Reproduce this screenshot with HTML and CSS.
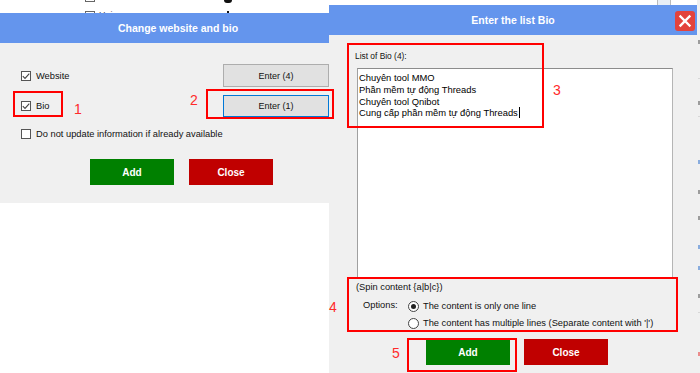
FILE: index.html
```html
<!DOCTYPE html>
<html>
<head>
<meta charset="utf-8">
<link rel="stylesheet" href="styles.css">
</head>
<body>
<div class="desk">
  <div class="backdrop">
    <span class="bd-box bd-box1"></span>
    <span class="bd-box bd-box2"></span>
    <span class="bd-text">Hei</span>
    <span class="bd-icon"></span>
    <span class="bd-dot"></span>
    <span class="bd-scroll"></span>
    <div class="bd-side">
      <span class="sb sb-d" style="top:40px"></span>
      <span class="sb sb-g" style="top:78px"></span>
      <span class="sb sb-d" style="top:101px"></span>
      <span class="sb sb-g" style="top:116px"></span>
      <span class="sb sb-b" style="top:160px"></span>
      <span class="sb sb-d" style="top:190px"></span>
      <span class="sb sb-d" style="top:216px"></span>
      <span class="sb sb-b" style="top:245px"></span>
      <span class="sb sb-b" style="top:266px"></span>
      <span class="sb sb-d" style="top:294px"></span>
      <span class="sb sb-g" style="top:312px"></span>
      <span class="sb sb-r" style="top:352px"></span>
    </div>
  </div>

  <section class="win win-left">
    <header class="titlebar">Change website and bio</header>
    <div class="left-body">
      <div class="row row-web">
        <label class="check"><span class="box"><svg viewBox="0 0 10 10" width="10" height="10"><path d="M1.8 5.2 L4 7.4 L8.3 2.6" fill="none" stroke="#444" stroke-width="1.1"/></svg></span>Website</label>
        <button class="btn-enter">Enter (4)</button>
      </div>
      <div class="row row-bio">
        <label class="check"><span class="box"><svg viewBox="0 0 10 10" width="10" height="10"><path d="M1.8 5.2 L4 7.4 L8.3 2.6" fill="none" stroke="#444" stroke-width="1.1"/></svg></span>Bio</label>
        <button class="btn-enter focused">Enter (1)</button>
      </div>
      <div class="row row-opt">
        <label class="check"><span class="box"></span>Do not update information if already available</label>
      </div>
      <div class="actions left-actions">
        <button class="btn add">Add</button>
        <button class="btn close">Close</button>
      </div>
    </div>
  </section>

  <section class="win win-right">
    <header class="titlebar titlebar-grid">
      <span></span>
      <span class="title-text">Enter the list Bio</span>
      <span class="xbtn"><svg viewBox="0 0 20 20" width="20" height="20"><path d="M5.5 5.5 L14.5 14.5 M14.5 5.5 L5.5 14.5" stroke="#fff" stroke-width="2.4" stroke-linecap="square"/></svg></span>
    </header>
    <div class="right-body">
      <div class="field-label">List of Bio (4):</div>
      <div class="textarea">
        <div>Chuyên tool MMO</div>
        <div>Phần mềm tự động Threads</div>
        <div>Chuyên tool Qnibot</div>
        <div>Cung cấp phần mềm tự động Threads<span class="caret"></span></div>
      </div>
      <div class="spin">(Spin content {a|b|c})</div>
      <div class="options">
        <span class="opt-label">Options:</span>
        <div class="radios">
          <label class="radio"><span class="circle on"></span>The content is only one line</label>
          <label class="radio"><span class="circle"></span>The content has multiple lines (Separate content with '|')</label>
        </div>
      </div>
      <div class="actions right-actions">
        <button class="btn add">Add</button>
        <button class="btn close">Close</button>
      </div>
    </div>
  </section>

  <div class="mark m1"></div>
  <div class="mark m2"></div>
  <div class="mark m3"></div>
  <div class="mark m4"></div>
  <div class="mark m5"></div>
  <span class="num n1">1</span>
  <span class="num n2">2</span>
  <span class="num n3">3</span>
  <span class="num n4">4</span>
  <span class="num n5">5</span>
</div>
</body>
</html>
```
FILE: styles.css
```css
* { box-sizing: border-box; }
html, body { margin: 0; padding: 0; }
body {
  width: 700px;
  height: 373px;
  overflow: hidden;
  background: #fff;
  font-family: "Liberation Sans", Arial, sans-serif;
  color: #111;
}
.desk {
  position: relative;
  width: 700px;
  height: 373px;
  overflow: hidden;
  background: #fff;
}

/* backdrop fragments */
.backdrop { position: absolute; inset: 0; }
.bd-box { position: absolute; width: 10px; height: 10px; border: 1px solid #666; background: #fff; }
.bd-box1 { left: 85px; top: -8px; }
.bd-box2 { left: 85px; top: 11px; }
.bd-text { position: absolute; left: 99px; top: 10px; font-size: 9px; color: #444; }
.bd-icon { position: absolute; left: 224px; top: -3px; width: 8px; height: 6px; background: #111; border-radius: 3px; }
.bd-dot { position: absolute; left: 227px; top: 11px; width: 2px; height: 2px; background: #111; }
.bd-scroll { position: absolute; left: 657px; top: 0; width: 14px; height: 6px; border-left: 1px solid #bbb; border-right: 1px solid #bbb; background: #e8eef6; }
.bd-side { position: absolute; left: 697px; top: 0; width: 3px; height: 373px; background: #f0f0f0; }
.sb { position: absolute; left: 1px; width: 2px; height: 4px; opacity: 0.7; }
.sb-d { background: #777; }
.sb-g { background: #ccc; height: 1px; }
.sb-b { background: #5b8fd6; }
.sb-r { background: #e86060; }

/* windows */
.win { position: absolute; background: #f0f0f0; }
.win-left { left: 0; top: 13px; width: 356px; height: 190px; }
.win-right { left: 329px; top: 5px; width: 368px; height: 372px; }

.titlebar {
  height: 30px;
  background: #6495ed;
  color: #fff;
  font-weight: bold;
  font-size: 10.5px;
  display: flex;
  align-items: center;
  justify-content: center;
}
.titlebar-grid {
  display: grid;
  grid-template-columns: 1fr auto 1fr;
  align-items: center;
}
.xbtn {
  justify-self: end;
  margin-right: 2px;
  margin-top: 1px;
  width: 20px;
  height: 20px;
  background: #e3433d;
  border-radius: 3px;
  display: flex;
}

/* left dialog body */
.left-body {
  padding: 21px 27px 0 21px;
  font-size: 9.3px;
  color: #111;
}
.row { display: flex; justify-content: space-between; align-items: center; }
.row-web { height: 23px; }
.row-bio { height: 22px; margin-top: 8px; }
.row-opt { height: 14px; margin-top: 10px; }
.check { display: flex; align-items: center; gap: 5px; }
.box {
  width: 10px;
  height: 10px;
  border: 1px solid #555;
  background: #fff;
  display: flex;
}
.box svg { display: block; margin: -1px; }
.btn-enter {
  width: 106px;
  height: 100%;
  background: #e1e1e1;
  border: 1px solid #adadad;
  font-family: "Liberation Sans", Arial, sans-serif;
  font-size: 9px;
  color: #111;
  padding: 0;
}
.btn-enter.focused { border: 1px solid #0078d7; background: #e1e1e1; }

.actions { display: flex; justify-content: center; }
.left-actions { margin-top: 18px; gap: 15px; padding-left: 13px; }
.btn {
  width: 84px;
  height: 26px;
  border: none;
  color: #fff;
  font-family: "Liberation Sans", Arial, sans-serif;
  font-weight: bold;
  font-size: 10px;
  padding: 0;
}
.btn.add { background: #008000; }
.btn.close { background: #c00000; }

/* right dialog body */
.right-body {
  padding: 16px 0 0 26px;
  font-size: 9.3px;
  color: #111;
}
.field-label { font-size: 8.4px; line-height: 11px; height: 11px; }
.textarea {
  margin-top: 6px;
  margin-left: 2px;
  width: 316px;
  height: 210px;
  background: #fff;
  border: 1px solid #b5b5b5;
  border-top-color: #8c8c8c;
  border-left-color: #a0a0a0;
  padding: 3px 1px;
  font-size: 9.4px;
  line-height: 11.8px;
  color: #000;
}
.caret { display: inline-block; width: 1px; height: 11px; background: #000; vertical-align: -2px; margin-left: 1px; }
.spin { margin-top: 2.5px; margin-left: 1px; line-height: 12px; height: 12px; }
.options { display: flex; margin-top: 5px; margin-left: 8px; }
.opt-label { width: 45px; line-height: 17px; margin-top: -1px; }
.radios { display: flex; flex-direction: column; }
.radio { display: flex; align-items: center; gap: 4px; height: 17px; }
.circle {
  width: 11px;
  height: 11px;
  border: 1px solid #444;
  border-radius: 50%;
  background: #fff;
  display: flex;
  align-items: center;
  justify-content: center;
}
.circle.on::after { content: ""; width: 5px; height: 5px; border-radius: 50%; background: #222; }
.right-actions { margin-top: 7.5px; gap: 14px; margin-left: -26px; padding-left: 8px; }

/* annotations */
.mark { position: absolute; border: 2px solid #ff0000; }
.m1 { left: 13px; top: 91px; width: 50px; height: 26px; }
.m2 { left: 206px; top: 89px; width: 128px; height: 30px; }
.m3 { left: 347px; top: 43px; width: 197px; height: 85px; }
.m4 { left: 347px; top: 277px; width: 331px; height: 55px; }
.m5 { left: 407px; top: 338px; width: 110px; height: 34px; }
.num {
  position: absolute;
  font-size: 14px;
  line-height: 14px;
  color: #ff2a2a;
  font-family: "Liberation Sans", Arial, sans-serif;
}
.n1 { left: 74px; top: 102px; }
.n2 { left: 190px; top: 93px; }
.n3 { left: 553px; top: 83px; }
.n4 { left: 329px; top: 300px; }
.n5 { left: 392px; top: 346px; }
```
